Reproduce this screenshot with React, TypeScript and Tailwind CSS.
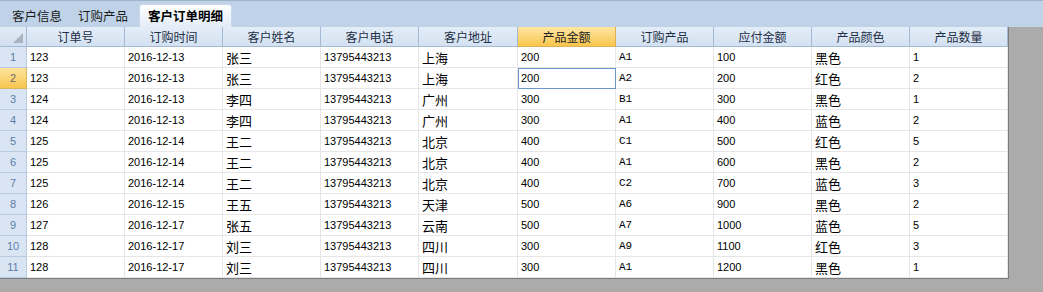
import React from "react";

const cols = [
  { name: "订单号", w: "w-[98px]" },
  { name: "订购时间", w: "w-[98px]" },
  { name: "客户姓名", w: "w-[98px]" },
  { name: "客户电话", w: "w-[98px]" },
  { name: "客户地址", w: "w-[99px]" },
  { name: "产品金额", w: "w-[98px]" },
  { name: "订购产品", w: "w-[98px]" },
  { name: "应付金额", w: "w-[98px]" },
  { name: "产品颜色", w: "w-[98px]" },
  { name: "产品数量", w: "w-[98px]" },
];

const rows: string[][] = [
  ["123", "2016-12-13", "张三", "13795443213", "上海", "200", "A1", "100", "黑色", "1"],
  ["123", "2016-12-13", "张三", "13795443213", "上海", "200", "A2", "200", "红色", "2"],
  ["124", "2016-12-13", "李四", "13795443213", "广州", "300", "B1", "300", "黑色", "1"],
  ["124", "2016-12-13", "李四", "13795443213", "广州", "300", "A1", "400", "蓝色", "2"],
  ["125", "2016-12-14", "王二", "13795443213", "北京", "400", "C1", "500", "红色", "5"],
  ["125", "2016-12-14", "王二", "13795443213", "北京", "400", "A1", "600", "黑色", "2"],
  ["125", "2016-12-14", "王二", "13795443213", "北京", "400", "C2", "700", "蓝色", "3"],
  ["126", "2016-12-15", "王五", "13795443213", "天津", "500", "A6", "900", "黑色", "2"],
  ["127", "2016-12-17", "张五", "13795443213", "云南", "500", "A7", "1000", "蓝色", "5"],
  ["128", "2016-12-17", "刘三", "13795443213", "四川", "300", "A9", "1100", "红色", "3"],
  ["128", "2016-12-17", "刘三", "13795443213", "四川", "300", "A1", "1200", "黑色", "1"],
];

const cjkCols = new Set([2, 4, 8]);
const monoCols = new Set([6]);

export default function App() {
  return (
    <div className="w-[1043px] h-[292px] bg-[#ababab] flex flex-col overflow-hidden font-['Liberation_Sans','Noto_Sans_CJK_SC',sans-serif]">
      {/* tab bar */}
      <div className="h-[27px] bg-[#bfd2e8] border-t border-[#9fb3cc] flex items-end pl-[5px] shrink-0">
        <div className="h-[22px] px-[7px] flex items-center text-[12.5px] text-[#1b1b1b] font-['Noto_Sans_CJK_SC',sans-serif]">客户信息</div>
        <div className="h-[22px] px-[9px] flex items-center text-[12.5px] text-[#1b1b1b] font-['Noto_Sans_CJK_SC',sans-serif]">订购产品</div>
        <div className="h-[23px] ml-[2px] px-[8px] flex items-center bg-gradient-to-b from-[#ffffff] to-[#e3ecf7] rounded-t-[3px] border-x border-t border-[#c9d8ea] text-[12.5px] font-bold text-black font-['Noto_Sans_CJK_SC',sans-serif]">客户订单明细</div>
      </div>
      {/* grid area */}
      <div className="flex shrink-0">
        <div className="w-[1009px] bg-white border-r border-b border-[#7d7d7d] flex flex-col">
          {/* header */}
          <div className="flex h-[20px]">
            <div className="w-[27px] h-[20px] bg-gradient-to-b from-[#e2ebf6] to-[#d2dff0] border-r border-b border-[#a4b9d2] relative">
              <svg className="absolute right-[3px] bottom-[3px]" width="10" height="10" viewBox="0 0 10 10">
                <polygon points="10,0 10,10 0,10" fill="#a9b4c2" />
              </svg>
            </div>
            {cols.map((c, i) => (
              <div
                key={c.name}
                className={`${c.w} h-[20px] border-r border-b flex items-center justify-center text-[12px] font-['Noto_Sans_CJK_SC',sans-serif] ${
                  i === 5
                    ? "bg-gradient-to-b from-[#fee7a1] to-[#f8c64b] border-[#e0b152] text-[#222]"
                    : "bg-gradient-to-b from-[#e4edf8] to-[#d3e1f1] border-[#a4b9d2] text-[#1f2f45]"
                }`}
              >
                {c.name}
              </div>
            ))}
          </div>
          {/* rows */}
          {rows.map((r, ri) => (
            <div key={ri} className="flex h-[21px]">
              <div
                className={`w-[27px] h-[21px] border-r border-b flex items-center justify-center text-[11px] ${
                  ri === 1
                    ? "bg-gradient-to-b from-[#fde49a] to-[#f7c64c] border-[#d9b45c] text-[#6a6a6a]"
                    : "bg-[#dae5f3] border-[#b8cbe0] text-[#5d7ea8]"
                }`}
              >
                {ri + 1}
              </div>
              {r.map((v, ci) => (
                <div
                  key={ci}
                  className={`${cols[ci].w} h-[21px] border-r border-b border-[#e6e6e6] flex items-center px-[3px] text-black ${
                    cjkCols.has(ci)
                      ? "text-[13px] text-[#111] font-['Noto_Sans_CJK_SC',sans-serif] pt-[1px]"
                      : monoCols.has(ci)
                      ? "text-[11px] font-['Liberation_Mono','DejaVu_Sans_Mono',monospace]"
                      : "text-[11px]"
                  } ${ri === 1 && ci === 5 ? "outline outline-1 -outline-offset-1 outline-[#6c96cc]" : ""}`}
                >
                  {v}
                </div>
              ))}
            </div>
          ))}
        </div>
      </div>
    </div>
  );
}
